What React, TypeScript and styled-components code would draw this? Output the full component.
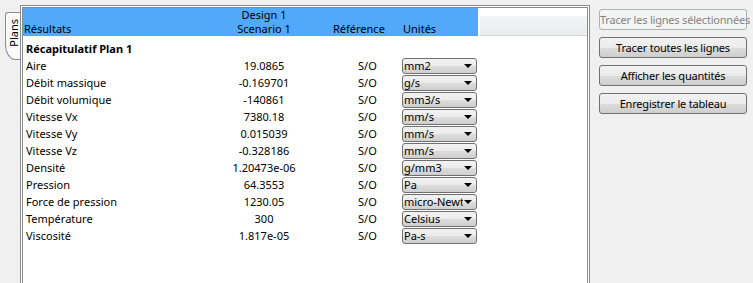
import styled, {createGlobalStyle} from 'styled-components';

const GlobalStyle = createGlobalStyle`
  html, body {
    margin: 0;
    padding: 0;
    background: #f0f0f0;
    overflow: hidden;
  }
  body {
    font-family: 'Noto Sans', 'Open Sans', Arial, sans-serif;
    font-size: 11px;
    color: #000;
  }
`;

const Screen = styled.div`
  display: flex;
  align-items: flex-start;
  width: 753px;
  height: 283px;
  padding-top: 5px;
  box-sizing: border-box;
`;

const TabStrip = styled.div`
  width: 20px;
  padding-top: 7px;
  display: flex;
  justify-content: flex-end;
`;

const Tab = styled.div`
  width: 14px;
  height: 46px;
  border: 1px solid #898c95;
  border-right: none;
  border-radius: 3px 0 0 10px / 3px 0 0 16px;
  background: #fbfbfb;
  display: flex;
  align-items: center;
  justify-content: center;
`;

const TabLabel = styled.span`
  writing-mode: vertical-rl;
  transform: rotate(180deg);
  line-height: 13px;
  margin-top: -6px;
`;

const Panel = styled.div`
  width: 570px;
  height: 278px;
  border: 3px double #8a8c90;
  border-bottom: none;
  box-sizing: border-box;
  background: #fff;
`;

const HeaderBar = styled.div`
  display: flex;
  height: 28px;
`;

const Grid = styled.div`
  display: grid;
  grid-template-columns: 190px 102px 84px 79px;
`;

const HeaderGrid = styled(Grid)`
  background: #52a8fa;
  height: 28px;
  align-items: end;
`;

const HeaderCell = styled.div<{$align?: 'left' | 'center'; $pad?: number}>`
  text-align: ${({$align}) => $align ?? 'left'};
  padding-left: ${({$pad}) => $pad ?? 0}px;
  line-height: 14px;
  white-space: nowrap;
`;

const HeaderFiller = styled.div`
  flex: 1;
  margin-left: 1px;
  border-left: 1px solid #fff;
  border-bottom: 1px solid #d5d5d5;
  background: linear-gradient(#ffffff 0%, #ffffff 30%, #f3f4f6 31%, #eaebee 100%);
`;

const SectionTitle = styled.div`
  font-weight: 700;
  height: 21px;
  padding: 5px 0 0 3px;
  box-sizing: border-box;
  line-height: 16px;
`;

const Row = styled(Grid)`
  height: 17px;
  align-items: center;
`;

const Cell = styled.div<{$align?: 'left' | 'center'; $pad?: number}>`
  text-align: ${({$align}) => $align ?? 'left'};
  padding-left: ${({$pad}) => $pad ?? 0}px;
  line-height: 17px;
  white-space: nowrap;
`;

const Select = styled.div`
  margin-left: 3px;
  width: 75px;
  height: 16px;
  box-sizing: border-box;
  border: 1px solid #707070;
  border-radius: 3px;
  background: linear-gradient(#f2f2f2 0%, #ebebeb 50%, #dddddd 51%, #cfcfcf 100%);
  display: flex;
  align-items: center;
  overflow: hidden;
`;

const SelectText = styled.span`
  flex: 1;
  min-width: 0;
  padding-left: 1px;
  line-height: 14px;
  white-space: nowrap;
  overflow: hidden;
`;

const Caret = styled.span`
  flex: none;
  width: 0;
  height: 0;
  margin: 0 4px 0 1px;
  border-left: 4px solid transparent;
  border-right: 4px solid transparent;
  border-top: 4px solid #000;
`;

const ButtonColumn = styled.div`
  margin-left: 9px;
  padding-top: 4px;
  width: 148px;
  display: flex;
  flex-direction: column;
  gap: 7px;
`;

const Button = styled.div<{$disabled?: boolean}>`
  height: 21px;
  box-sizing: border-box;
  border: 1px solid ${({$disabled}) => ($disabled ? '#adb2b5' : '#707070')};
  border-radius: 3px;
  background: ${({$disabled}) =>
    $disabled
      ? '#f4f4f4'
      : 'linear-gradient(#f2f2f2 0%, #ebebeb 50%, #dddddd 51%, #cfcfcf 100%)'};
  color: ${({$disabled}) => ($disabled ? '#838383' : '#000')};
  text-align: center;
  line-height: 19px;
  letter-spacing: -0.2px;
  white-space: nowrap;
`;

type Line = {name: string; value: string; unit: string};

const lines: Line[] = [
  {name: 'Aire', value: '19.0865', unit: 'mm2'},
  {name: 'Débit massique', value: '-0.169701', unit: 'g/s'},
  {name: 'Débit volumique', value: '-140861', unit: 'mm3/s'},
  {name: 'Vitesse Vx', value: '7380.18', unit: 'mm/s'},
  {name: 'Vitesse Vy', value: '0.015039', unit: 'mm/s'},
  {name: 'Vitesse Vz', value: '-0.328186', unit: 'mm/s'},
  {name: 'Densité', value: '1.20473e-06', unit: 'g/mm3'},
  {name: 'Pression', value: '64.3553', unit: 'Pa'},
  {name: 'Force de pression', value: '1230.05', unit: 'micro-Newton'},
  {name: 'Température', value: '300', unit: 'Celsius'},
  {name: 'Viscosité', value: '1.817e-05', unit: 'Pa-s'},
];

const actions = [
  'Tracer toutes les lignes',
  'Afficher les quantités',
  'Enregistrer le tableau',
];

const App = () => (
  <>
    <GlobalStyle />
    <Screen>
      <TabStrip>
        <Tab>
          <TabLabel>Plans</TabLabel>
        </Tab>
      </TabStrip>
      <Panel>
        <HeaderBar>
          <HeaderGrid>
            <HeaderCell $pad={1}>Résultats</HeaderCell>
            <HeaderCell $align="center">
              Design 1
              <br />
              Scenario 1
            </HeaderCell>
            <HeaderCell $pad={18}>Référence</HeaderCell>
            <HeaderCell $pad={4}>Unités</HeaderCell>
          </HeaderGrid>
          <HeaderFiller />
        </HeaderBar>
        <SectionTitle>Récapitulatif Plan 1</SectionTitle>
        {lines.map((line) => (
          <Row key={line.name}>
            <Cell $pad={3}>{line.name}</Cell>
            <Cell $align="center">{line.value}</Cell>
            <Cell $pad={43}>S/O</Cell>
            <Select>
              <SelectText>{line.unit}</SelectText>
              <Caret />
            </Select>
          </Row>
        ))}
      </Panel>
      <ButtonColumn>
        <Button $disabled>Tracer les lignes sélectionnées</Button>
        {actions.map((label) => (
          <Button key={label}>{label}</Button>
        ))}
      </ButtonColumn>
    </Screen>
  </>
);

export default App;
